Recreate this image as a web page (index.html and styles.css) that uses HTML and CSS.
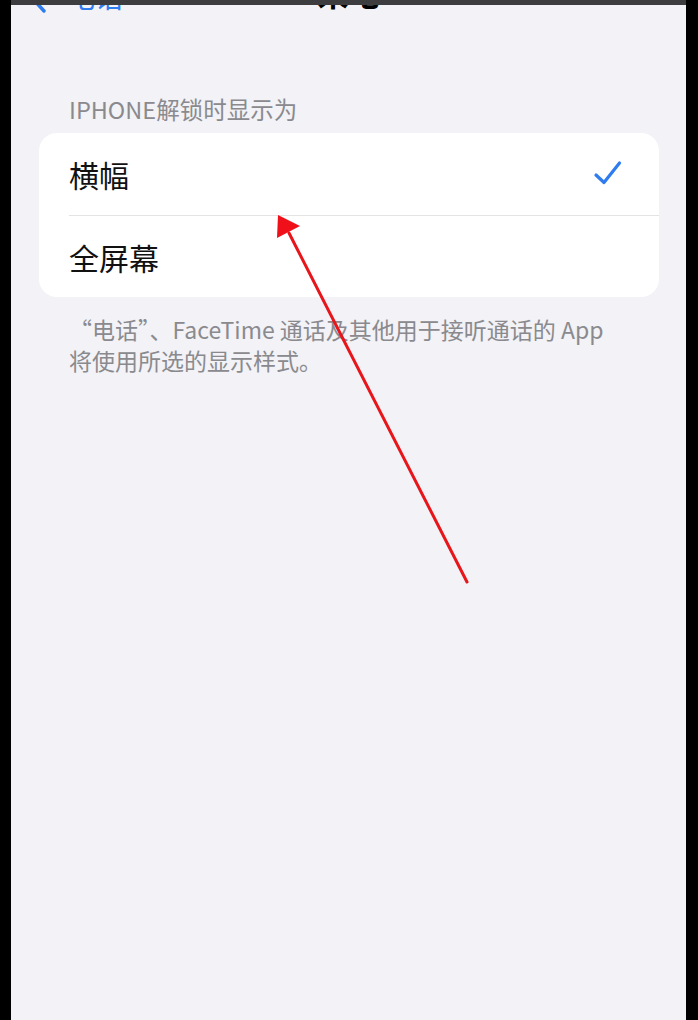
FILE: index.html
```html
<!DOCTYPE html>
<html lang="zh-CN">
<head>
<meta charset="utf-8">
<title>来电</title>
<link rel="stylesheet" href="styles.css">
</head>
<body>
<div class="screen">
  <div class="topbar"></div>
  <div class="nav">
    <div class="back">
      <svg class="chev" width="16" height="26" viewBox="0 0 16 26"><path d="M13 2 L3 13 L13 24" fill="none" stroke="#2f7bf0" stroke-width="3.4" stroke-linecap="round" stroke-linejoin="round"/></svg>
      <span class="back-text">电话</span>
    </div>
    <div class="title">来电</div>
    <div></div>
  </div>

  <div class="content">
    <div class="group-header">IPHONE解锁时显示为</div>
    <div class="card">
      <div class="row">
        <span class="row-label">横幅</span>
        <svg class="check" width="30" height="30" viewBox="0 0 30 30"><path d="M3 16 L11 23.5 L26.5 4" fill="none" stroke="#2f7bf0" stroke-width="3.2" stroke-linecap="round" stroke-linejoin="round"/></svg>
      </div>
      <div class="row">
        <span class="row-label">全屏幕</span>
      </div>
    </div>
    <div class="group-footer">“电话”、FaceTime 通话及其他用于接听通话的 App 将使用所选的显示样式。</div>
  </div>

  <svg class="annot" width="675" height="1020" viewBox="11 0 675 1020">
    <line x1="467" y1="582" x2="289" y2="233" stroke="#e8161a" stroke-width="3" stroke-linecap="round"/>
    <polygon points="278,215 300,226 277,238" fill="#f0101a"/>
  </svg>
</div>
</body>
</html>
```

FILE: styles.css
```css
html, body {
  margin: 0;
  padding: 0;
  background: #000;
}

body {
  font-family: "Noto Sans CJK SC", "Noto Sans", sans-serif;
  height: 1020px;
  overflow: hidden;
}

.screen {
  position: relative;
  margin-left: 11px;
  width: 675px;
  height: 1020px;
  background: #f2f2f7;
  overflow: hidden;
}

.topbar {
  position: absolute;
  left: 0;
  top: 0;
  width: 675px;
  height: 5px;
  background: #3d3d3f;
  z-index: 2;
}

.nav {
  height: 40px;
  margin-top: -30px;
  display: grid;
  grid-template-columns: 1fr auto 1fr;
  align-items: end;
}

.back {
  display: flex;
  align-items: flex-end;
  padding-left: 20px;
}

.chev {
  margin-bottom: -3px;
}

.back-text {
  margin-left: 20px;
  font-size: 28px;
  line-height: 1;
  color: #2f7bf0;
}

.title {
  font-size: 31px;
  line-height: 1;
  font-weight: 700;
  color: #000;
  margin-bottom: 2px;
}

.content {
  padding: 84px 27px 0 28px;
}

.group-header {
  padding-left: 30px;
  font-size: 23.5px;
  line-height: 30px;
  color: #8a8a8e;
  margin-bottom: 9px;
}

.card {
  background: #fff;
  border-radius: 18px;
  overflow: hidden;
}

.row {
  height: 82px;
  margin-left: 30px;
  padding-right: 36px;
  display: flex;
  align-items: center;
  justify-content: space-between;
  box-sizing: border-box;
}

.row + .row {
  border-top: 1.5px solid #e3e3e6;
}

.row-label {
  font-size: 30px;
  color: #111;
}

.group-footer {
  margin-top: 17px;
  padding-left: 30px;
  padding-right: 30px;
  font-size: 23px;
  line-height: 31px;
  color: #8a8a8e;
}

.annot {
  position: absolute;
  left: 0;
  top: 0;
  z-index: 3;
}
```
